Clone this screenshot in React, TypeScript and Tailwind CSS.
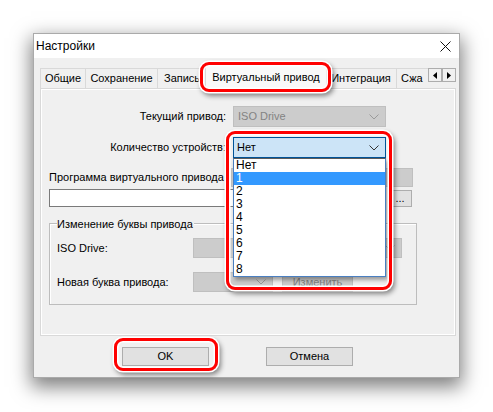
import React from "react";

const font = "font-['Liberation_Sans',Arial,sans-serif]";

function Chevron({ color = "#333333" }: { color?: string }) {
  return (
    <svg width="10" height="6" viewBox="0 0 10 6" fill="none">
      <path d="M0.5 0.5L5 5L9.5 0.5" stroke={color} strokeWidth="1" />
    </svg>
  );
}

function Ring({ className }: { className: string }) {
  return (
    <div
      className={`pointer-events-none absolute z-30 rounded-[9px] border-[3px] border-[#ff0000] shadow-[0_0_0_1.5px_#ffffff,inset_0_0_0_1.5px_#ffffff,2px_3px_5px_1px_rgba(0,0,0,0.45)] ${className}`}
    />
  );
}

function DisabledSelect({ text, className }: { text?: string; className: string }) {
  return (
    <div
      className={`flex items-center justify-between border border-[#bfbfbf] bg-[#cccccc] pl-[4px] pr-[6px] text-[11px] text-[#838383] ${className}`}
    >
      <span>{text}</span>
      <Chevron color="#9a9a9a" />
    </div>
  );
}

function Tab({ label, className }: { label: string; className: string }) {
  return (
    <div
      className={`flex h-[20px] items-center justify-center overflow-hidden whitespace-nowrap border border-b-0 border-[#d9d9d9] bg-[#f0f0f0] text-[11px] ${className}`}
    >
      {label}
    </div>
  );
}

function ArrowBtn({ dir }: { dir: "left" | "right" }) {
  return (
    <div className="flex h-[14px] w-[14px] items-center justify-center border border-[#adadad] bg-[#f0f0f0]">
      <svg width="4" height="7" viewBox="0 0 4 7">
        {dir === "left" ? <path d="M4 0L0 3.5L4 7Z" fill="#000" /> : <path d="M0 0L4 3.5L0 7Z" fill="#000" />}
      </svg>
    </div>
  );
}

export default function App() {
  const items = ["Нет", "1", "2", "3", "4", "5", "6", "7", "8"];

  return (
    <div className={`min-h-screen bg-white pl-[33px] pt-[33px] text-black ${font}`}>
      <div className="relative h-[345px] w-[427px] border border-[#aaaaaa] bg-[#f0f0f0] shadow-[0_7px_18px_2px_rgba(0,0,0,0.5)]">
        {/* title bar */}
        <div className="flex h-[24px] items-center justify-between bg-white pl-[2px] pr-[8px]">
          <span className="text-[12px]">Настройки</span>
          <svg width="11" height="11" viewBox="0 0 11 11">
            <path d="M0.5 0.5L10.5 10.5M10.5 0.5L0.5 10.5" stroke="#111" strokeWidth="1" />
          </svg>
        </div>

        {/* tabs */}
        <div className="ml-[6px] mt-[5px] flex h-[25px] items-end">
          <Tab label="Общие" className="w-[46px]" />
          <Tab label="Сохранение" className="w-[72px] border-l-0" />
          <Tab label="Запись" className="w-[49px] justify-start border-l-0 pl-[6px]" />
          <div className="relative z-20 -mx-[2px] -mb-px flex h-[25px] w-[122px] items-center justify-center border border-b-0 border-[#d9d9d9] bg-[#f9f9f9] text-[11px]">
            Виртуальный привод
            <Ring className="-bottom-[3px] -left-[6px] -right-[5px] -top-[3px]" />
          </div>
          <Tab label="Интеграция" className="w-[72px]" />
          <Tab label="Сжа" className="w-[31px] justify-start border-l-0 border-r-0 pl-[4px]" />
          <div className="mb-[6px] flex">
            <ArrowBtn dir="left" />
            <ArrowBtn dir="right" />
          </div>
        </div>

        {/* panel */}
        <div className="relative ml-[6px] h-[248px] w-[416px] border border-[#d9d9d9] bg-[#f0f0f0] text-[11px] shadow-[inset_1px_1px_0_#ffffff,inset_-1px_-1px_0_#ffffff]">
          <div className="mt-[17px] flex h-[21px] items-center">
            <div className="w-[185px] text-right">Текущий привод:</div>
            <DisabledSelect text="ISO Drive" className="ml-[7px] h-[21px] w-[153px]" />
          </div>

          <div className="mt-[10px] flex h-[21px] items-center">
            <div className="w-[185px] text-right">Количество устройств:</div>
            <div className="relative ml-[7px] h-[21px] w-[153px]">
              <div className="flex h-full items-center justify-between border border-[#005499] bg-[#cce4f7] pl-[3px] pr-[6px]">
                <span>Нет</span>
                <Chevron />
              </div>
              <div className="absolute left-0 top-[21px] z-20 w-[153px] border border-[#4a7fc1] border-t-[#5a5a5a] bg-white shadow-[2px_3px_4px_rgba(0,0,0,0.35)]">
                {items.map((it) => (
                  <div
                    key={it}
                    className={`h-[13px] pl-[2px] text-[12px] leading-[13px] ${it === "1" ? "bg-[#3399ff] text-white" : ""}`}
                  >
                    {it}
                  </div>
                ))}
              </div>
              <Ring className="-left-[7px] -top-[6px] h-[159px] w-[166px]" />
            </div>
          </div>

          <div className="mt-[10px] flex h-[19px] items-center pl-[8px]">
            <span className="w-[182px] whitespace-nowrap">Программа виртуального привода</span>
            <div className="h-[19px] w-[182px] border border-[#bfbfbf] bg-[#cccccc]" />
          </div>

          <div className="mt-[2px] flex h-[18px] items-center pl-[8px]">
            <div className="h-[18px] w-[337px] border border-[#7a7a7a] bg-white" />
            <div className="ml-[2px] flex h-[17px] w-[24px] items-center justify-center border border-[#adadad] bg-[#e1e1e1] text-[11px] leading-none">
              ...
            </div>
          </div>

          {/* group box */}
          <div className="relative ml-[8px] mt-[16px] h-[82px] w-[368px] border border-[#bdbdbd] shadow-[inset_1px_1px_0_#ffffff]">
            <span className="absolute -top-[8px] left-[7px] bg-[#f0f0f0] pr-[1px]">Изменение буквы привода</span>
            <div className="mt-[14px] flex h-[20px] items-center pl-[7px]">
              <span className="w-[136px]">ISO Drive:</span>
              <DisabledSelect className="h-[20px] w-[209px]" />
            </div>
            <div className="mt-[14px] flex h-[20px] items-center pl-[7px]">
              <span className="w-[136px]">Новая буква привода:</span>
              <DisabledSelect className="h-[20px] w-[80px]" />
              <div className="ml-[9px] flex h-[20px] w-[71px] items-center justify-center border border-[#bfbfbf] bg-[#cccccc] text-[#838383]">
                Изменить
              </div>
            </div>
          </div>
        </div>

        {/* buttons */}
        <div className="ml-[88px] mt-[11px] flex gap-[57px] text-[11px]">
          <div className="relative flex h-[19px] w-[87px] items-center justify-center border border-[#adadad] bg-[#e1e1e1]">
            OK
            <Ring className="-bottom-[6px] -left-[9px] -right-[10px] -top-[10px]" />
          </div>
          <div className="flex h-[19px] w-[87px] items-center justify-center border border-[#adadad] bg-[#e1e1e1]">
            Отмена
          </div>
        </div>
      </div>
    </div>
  );
}
